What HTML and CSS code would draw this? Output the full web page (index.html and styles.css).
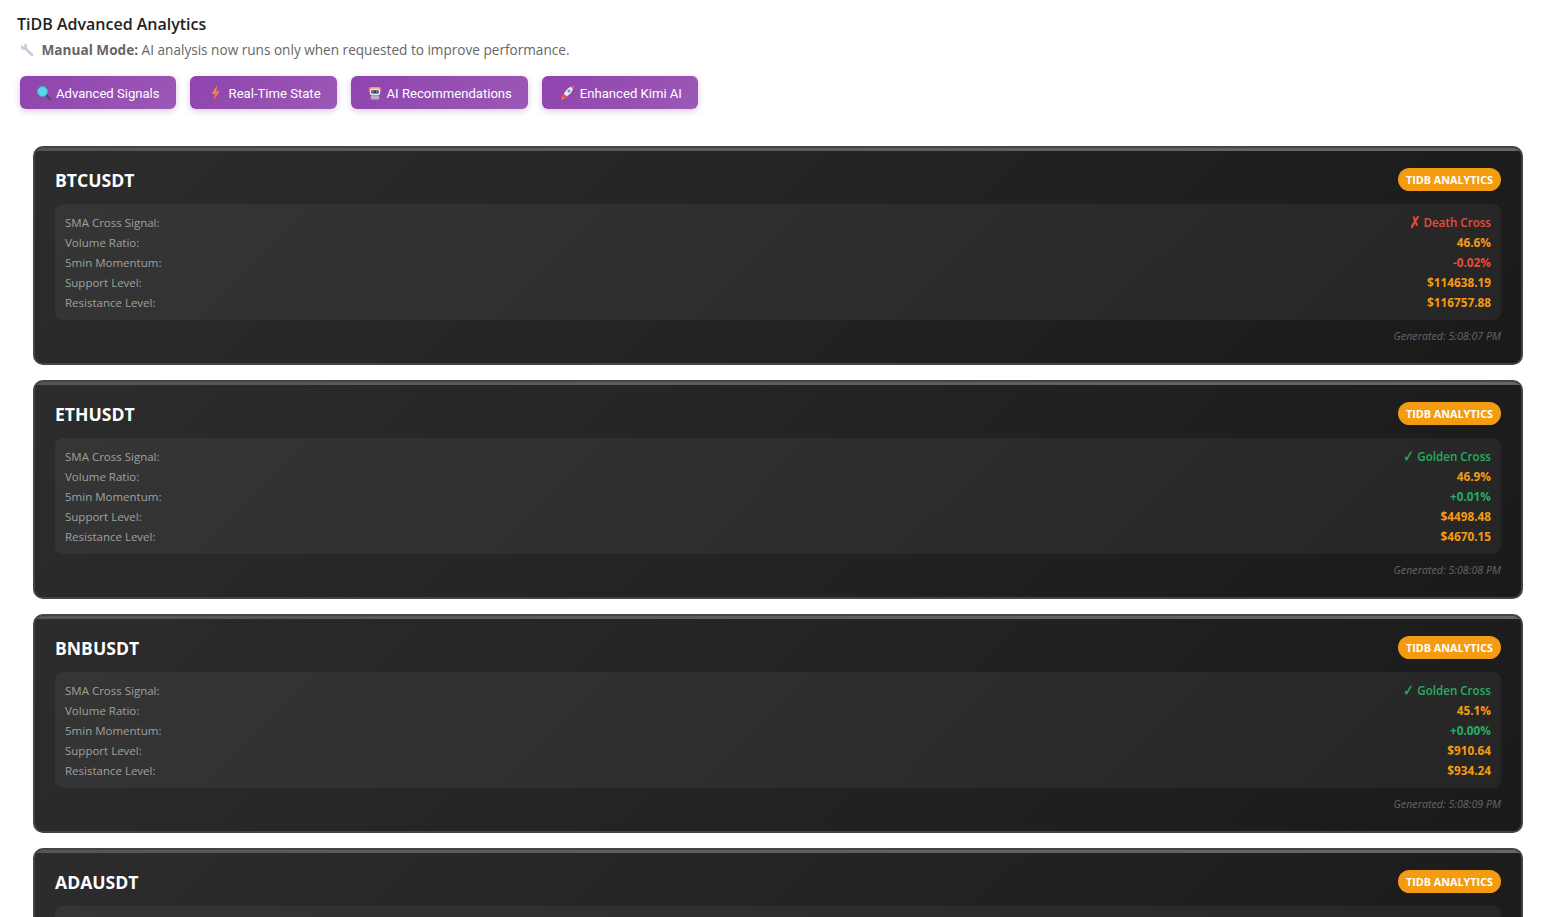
FILE: index.html
```html
<!DOCTYPE html>
<html lang="en">
<head>
    <meta charset="UTF-8">
    <meta name="viewport" content="width=device-width, initial-scale=1.0">
    <title>TiDB Advanced Analytics</title>
    <link rel="stylesheet" href="styles.css">
</head>
<body>
    <div class="page-head">
        <h3>TiDB Advanced Analytics</h3>
        <p class="note">
            <svg class="note-icon" viewBox="0 0 14 14" width="14" height="14">
                <path d="M5 5 L12 12" stroke="#cdc8dc" stroke-width="2.8" stroke-linecap="round"/>
                <path d="M1 1.5 L3.6 4 L5 3 L3.4 0.6 C5 0.2 6.6 1 7 2.6 C7.3 3.6 7 4.6 6.4 5.4 L5.4 6.4 C4.2 7 2.8 7 1.8 6 C0.8 5 0.6 3 1 1.5 Z" fill="#cdc8dc"/>
            </svg>
            <strong>Manual Mode:</strong> AI analysis now runs only when requested to improve performance.
        </p>
    </div>

    <!-- Analysis buttons -->
    <div class="actions">
        <button class="btn">
            <svg class="btn-icon icon-search" viewBox="0 0 16 16">
                <path d="M9.5 9.5 L14 14" stroke="#5b4a6b" stroke-width="2.6" stroke-linecap="round"/>
                <circle cx="6.5" cy="6.5" r="5" fill="#5fd3ea" stroke="#3aa8c9" stroke-width="1"/>
            </svg>
            Advanced Signals
        </button>
        <button class="btn">
            <svg class="btn-icon icon-bolt" viewBox="0 0 18 16">
                <defs>
                    <linearGradient id="bolt" x1="0" y1="0" x2="0" y2="1">
                        <stop offset="0" stop-color="#f9a23c"/>
                        <stop offset="1" stop-color="#ee5f45"/>
                    </linearGradient>
                </defs>
                <path d="M10.5 0.5 L5 9 H8.2 L7.2 15.5 L13 6.5 H9.8 Z" fill="url(#bolt)"/>
            </svg>
            Real-Time State
        </button>
        <button class="btn">
            <svg class="btn-icon icon-robot" viewBox="0 0 17 16">
                <rect x="1.5" y="2" width="1.6" height="5" fill="#e0506e"/>
                <rect x="13.9" y="2" width="1.6" height="5" fill="#e0506e"/>
                <rect x="3" y="1.5" width="11" height="3" rx="1" fill="#e8a06a"/>
                <rect x="3" y="3.5" width="11" height="6.5" rx="1.5" fill="#e8e4ec"/>
                <rect x="4.5" y="5" width="8" height="3.4" rx="1" fill="#2f3a55"/>
                <rect x="5.5" y="6" width="1.6" height="1.4" fill="#6ec6ea"/>
                <rect x="9.9" y="6" width="1.6" height="1.4" fill="#6ec6ea"/>
                <rect x="4" y="10.5" width="9" height="4.5" rx="1.5" fill="#b4b0c2"/>
            </svg>
            AI Recommendations
        </button>
        <button class="btn">
            <svg class="btn-icon" viewBox="0 0 18 16">
                <path d="M3 15 L4.6 10.6 L7.4 13.4 Z" fill="#f4813c"/>
                <path d="M3.6 10.4 L7 7 L10 12 L7 14 Z" fill="#e8476a"/>
                <path d="M6 9 C7.5 5 11 1.8 15.5 1 C15.2 5.5 12.5 9.5 8.6 11.2 Z" fill="#ece8f0"/>
                <path d="M12.5 1.6 C13.5 1.2 14.6 1 15.5 1 C15.4 2 15.2 3 14.8 4 Z" fill="#e8476a"/>
                <circle cx="11" cy="6" r="1.5" fill="#5b9bd5"/>
            </svg>
            Enhanced Kimi AI
        </button>
    </div>

    <div class="card-list">
        <div class="card">
            <div class="card-head">
                <h4>BTCUSDT</h4>
                <span class="badge">TIDB ANALYTICS</span>
            </div>
            <div class="metrics">
                <div class="metric"><span>SMA Cross Signal:</span><b class="signal down"><i>✗</i> Death Cross</b></div>
                <div class="metric"><span>Volume Ratio:</span><b class="warn">46.6%</b></div>
                <div class="metric"><span>5min Momentum:</span><b class="down">-0.02%</b></div>
                <div class="metric"><span>Support Level:</span><b class="warn">$114638.19</b></div>
                <div class="metric"><span>Resistance Level:</span><b class="warn">$116757.88</b></div>
            </div>
            <div class="stamp">Generated: 5:08:07 PM</div>
        </div>

        <div class="card">
            <div class="card-head">
                <h4>ETHUSDT</h4>
                <span class="badge">TIDB ANALYTICS</span>
            </div>
            <div class="metrics">
                <div class="metric"><span>SMA Cross Signal:</span><b class="signal up"><i>✓</i> Golden Cross</b></div>
                <div class="metric"><span>Volume Ratio:</span><b class="warn">46.9%</b></div>
                <div class="metric"><span>5min Momentum:</span><b class="up">+0.01%</b></div>
                <div class="metric"><span>Support Level:</span><b class="warn">$4498.48</b></div>
                <div class="metric"><span>Resistance Level:</span><b class="warn">$4670.15</b></div>
            </div>
            <div class="stamp">Generated: 5:08:08 PM</div>
        </div>

        <div class="card">
            <div class="card-head">
                <h4>BNBUSDT</h4>
                <span class="badge">TIDB ANALYTICS</span>
            </div>
            <div class="metrics">
                <div class="metric"><span>SMA Cross Signal:</span><b class="signal up"><i>✓</i> Golden Cross</b></div>
                <div class="metric"><span>Volume Ratio:</span><b class="warn">45.1%</b></div>
                <div class="metric"><span>5min Momentum:</span><b class="up">+0.00%</b></div>
                <div class="metric"><span>Support Level:</span><b class="warn">$910.64</b></div>
                <div class="metric"><span>Resistance Level:</span><b class="warn">$934.24</b></div>
            </div>
            <div class="stamp">Generated: 5:08:09 PM</div>
        </div>

        <div class="card">
            <div class="card-head">
                <h4>ADAUSDT</h4>
                <span class="badge">TIDB ANALYTICS</span>
            </div>
            <div class="metrics metrics-empty"></div>
        </div>
    </div>
</body>
</html>
```

FILE: styles.css
```css
html, body {
    margin: 0;
    padding: 0;
    height: 100%;
    overflow: hidden;
    background: #fff;
    font-family: "Open Sans", "Noto Sans", sans-serif;
}
.page-head {
    padding: 13px 0 0 17px;
}
h3 {
    margin: 0;
    font-size: 16px;
    line-height: 22px;
    font-weight: 600;
    color: #222;
}
.note {
    margin: 6px 0 0 3px;
    font-size: 13.6px;
    line-height: 18px;
    color: #666;
}
.note-icon {
    margin-right: 4px;
    vertical-align: -2px;
}
.note strong {
    font-weight: 700;
}
.actions {
    display: flex;
    gap: 14px;
    margin: 17px 0 0 20px;
}
.btn {
    display: flex;
    align-items: center;
    height: 33px;
    padding: 1px 16px 0;
    border: none;
    border-radius: 6px;
    color: #fff;
    font-family: Roboto, sans-serif;
    font-size: 13.1px;
    background: linear-gradient(135deg, #8e44ad, #9b59b6);
    box-shadow: 0 2px 6px rgba(142, 68, 173, 0.3);
}
.btn-icon {
    width: 18px;
    height: 16px;
    margin-right: 4px;
}
.icon-search {
    width: 16px;
}
.icon-bolt {
    width: 19px;
}
.icon-robot {
    width: 16px;
}
.card-list {
    display: flex;
    flex-direction: column;
    gap: 15px;
    margin: 37px 33px 0;
}
.card {
    position: relative;
    box-sizing: border-box;
    height: 219px;
    padding: 20px;
    flex-shrink: 0;
    border: 2px solid #444;
    border-radius: 10px;
    background: linear-gradient(135deg, #2c2c2c, #1a1a1a);
    overflow: hidden;
}
.card::before {
    content: "";
    position: absolute;
    top: 0;
    left: 0;
    right: 0;
    height: 3px;
    background: linear-gradient(90deg, #555, #666);
}
.card-head {
    display: flex;
    justify-content: space-between;
    align-items: center;
    height: 24px;
    margin-bottom: 12px;
}
h4 {
    margin: 0;
    font-size: 17.6px;
    font-weight: 700;
    color: #fff;
}
.badge {
    align-self: flex-start;
    padding: 0 8px;
    height: 23px;
    line-height: 23px;
    border-radius: 12px;
    background: #f39c12;
    color: #fff;
    font-size: 10.8px;
    font-weight: 700;
}
.metrics {
    padding: 9px 10px 7px;
    border-radius: 8px;
    background: rgba(255, 255, 255, 0.05);
}
.metrics-empty {
    height: 100px;
}
.metric {
    display: flex;
    justify-content: space-between;
    height: 20px;
    line-height: 20px;
    font-size: 11.5px;
    color: #a0a0a0;
}
.metric b {
    margin-top: -1px;
    font-size: 11.8px;
    font-weight: 700;
}
.metric .signal {
    margin-top: 0;
    font-size: 11.6px;
    font-weight: 600;
}
.signal i {
    display: inline-block;
    font-family: "DejaVu Sans", sans-serif;
    font-size: 13px;
    line-height: 0;
    font-style: normal;
    transform: scaleY(1.25);
    -webkit-text-stroke: 0.3px currentColor;
}
.down {
    color: #e74c3c;
}
.up {
    color: #27ae60;
}
.warn {
    color: #f39c12;
}
.stamp {
    margin-top: 8px;
    text-align: right;
    font-size: 10.7px;
    line-height: 16px;
    font-style: italic;
    color: #666;
}
```
